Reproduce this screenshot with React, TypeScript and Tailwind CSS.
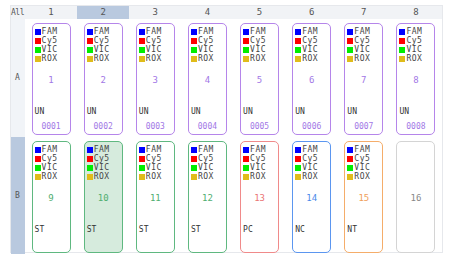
import React from "react";

type Well = {
  n: number;
  type?: string;
  id?: string;
  color: "purple" | "green" | "red" | "blue" | "orange" | "gray";
  selected?: boolean;
  empty?: boolean;
};

const borderCls: Record<Well["color"], string> = {
  purple: "border-[#b585ea]",
  green: "border-[#5fb880]",
  red: "border-[#f08a8a]",
  blue: "border-[#5b96f0]",
  orange: "border-[#f5ad6a]",
  gray: "border-[#d4d4d4]",
};
const numCls: Record<Well["color"], string> = {
  purple: "text-[#a277e6]",
  green: "text-[#4fae70]",
  red: "text-[#ea7474]",
  blue: "text-[#4b88ea]",
  orange: "text-[#f0a05a]",
  gray: "text-[#888888]",
};

const dyes = [
  { name: "FAM", cls: "bg-[#0000ff]" },
  { name: "Cy5", cls: "bg-[#ff0000]" },
  { name: "VIC", cls: "bg-[#00ee00]" },
  { name: "ROX", cls: "bg-[#e0bc1a]" },
];

const rowA: Well[] = [1, 2, 3, 4, 5, 6, 7, 8].map((n) => ({
  n,
  type: "UN",
  id: String(n).padStart(4, "0"),
  color: "purple",
}));
const rowB: Well[] = [
  { n: 9, type: "ST", color: "green" },
  { n: 10, type: "ST", color: "green", selected: true },
  { n: 11, type: "ST", color: "green" },
  { n: 12, type: "ST", color: "green" },
  { n: 13, type: "PC", color: "red" },
  { n: 14, type: "NC", color: "blue" },
  { n: 15, type: "NT", color: "orange" },
  { n: 16, color: "gray", empty: true },
];

function Card({ w }: { w: Well }) {
  return (
    <div className="flex justify-center pt-[4px]">
      <div
        className={`w-[39px] h-[112px] rounded-[5px] border-[1.5px] ${borderCls[w.color]} ${
          w.selected ? "bg-[#d6ebdd]" : "bg-white"
        } flex flex-col pl-[2px] pt-[3px]`}
      >
        {w.empty ? (
          <div className={`mt-[48px] text-center pr-[2px] text-[9px] leading-[10px] ${numCls[w.color]}`}>{w.n}</div>
        ) : (
          <>
            {dyes.map((d) => (
              <div key={d.name} className="flex items-center h-[9px]">
                <span className={`w-[6px] h-[6px] ${d.cls}`} />
                <span className="ml-[1px] text-[8px] leading-[9px] tracking-[0.5px] text-[#444]">{d.name}</span>
              </div>
            ))}
            <div className={`mt-[12px] text-center pr-[2px] text-[9px] leading-[10px] ${numCls[w.color]}`}>{w.n}</div>
            <div className="mt-[22px] text-[8px] leading-[9px] text-[#333]">{w.type}</div>
            {w.id && (
              <div className={`mt-[6px] text-center pr-[2px] text-[8px] leading-[9px] ${numCls[w.color]}`}>{w.id}</div>
            )}
          </>
        )}
      </div>
    </div>
  );
}

export default function App() {
  return (
    <div
      className="w-[449px] h-[262px] bg-white pt-[5px] pl-[10px]"
      style={{ fontFamily: '"DejaVu Sans Mono", "Liberation Mono", monospace' }}
    >
      <div className="w-[433px] h-[248px] border border-[#e6e8ec] grid grid-cols-[14px_repeat(8,1fr)] grid-rows-[13px_118px_117px]">
        <div className="bg-[#f1f3f6] text-[8px] leading-[13px] text-[#555] whitespace-nowrap overflow-visible" style={{ letterSpacing: "0px" }}>
          <span className="tracking-[-0.5px]">All</span>
        </div>
        {[1, 2, 3, 4, 5, 6, 7, 8].map((c) => (
          <div
            key={c}
            className={`${c === 2 ? "bg-[#b9c9df]" : "bg-[#f1f3f6]"} text-center text-[9px] leading-[13px] text-[#555]`}
          >
            {c}
          </div>
        ))}
        <div className="bg-[#f1f4f8] flex items-center pl-[4px] text-[8px] text-[#555]">A</div>
        {rowA.map((w) => (
          <Card key={w.n} w={w} />
        ))}
        <div className="bg-[#b9c9df] flex items-center pl-[4px] text-[8px] text-[#555]">B</div>
        {rowB.map((w) => (
          <Card key={w.n} w={w} />
        ))}
      </div>
    </div>
  );
}
